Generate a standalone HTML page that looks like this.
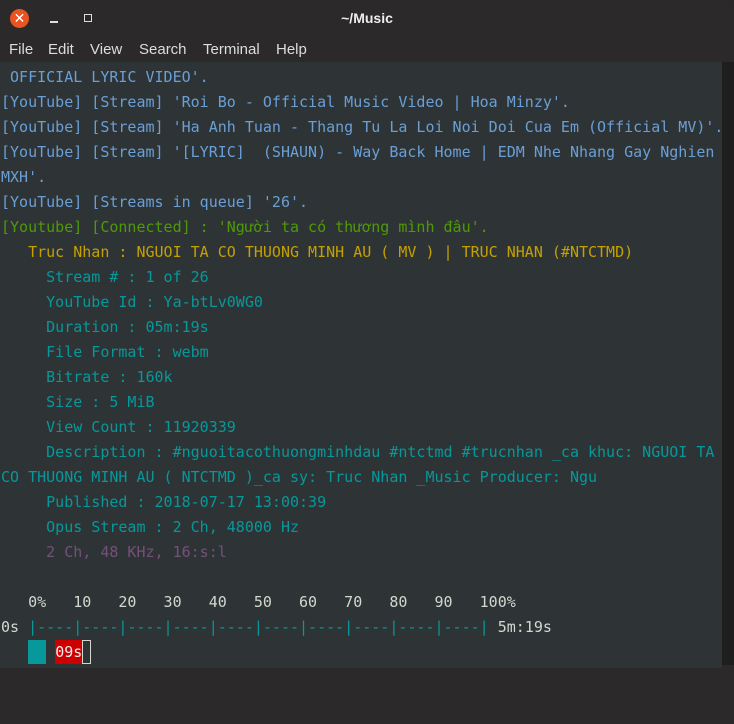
<!DOCTYPE html><html><head><meta charset="utf-8"><style>
body{margin:0;width:734px;height:665px;overflow:hidden;background:#2b2929;font-family:"Liberation Sans",sans-serif}
.hdr{position:absolute;left:0;top:0;width:734px;height:62px;background:#2b2929;border-radius:6px 6px 0 0}
.close{position:absolute;left:10px;top:9px;width:19px;height:19px;border-radius:50%;background:#e95420;color:#fff;font-size:14px;line-height:19px;text-align:center}
.min{position:absolute;left:50px;top:21px;width:8px;height:1.5px;background:#ddd}
.max{position:absolute;left:84px;top:14px;width:6px;height:6px;border:1.5px solid #ddd}
.title{position:absolute;left:0;width:734px;top:10px;text-align:center;color:#eee;font-weight:bold;font-size:14px}
.menu span{position:absolute;top:41px;color:#ddd;font-size:15px}
.term{position:absolute;left:0;top:62px;width:722px;height:603px;background:#2e3436;font-family:"DejaVu Sans Mono","Liberation Mono",monospace;font-size:15px;line-height:25px;white-space:pre;color:#d3d7cf;padding-top:3px}
.t{padding-left:1px}
.sb{position:absolute;left:722px;top:62px;width:12px;height:603px;background:#1e1e1e}
.th{position:absolute;left:725px;top:473px;width:6px;height:189px;background:#7a7a7a;border-radius:3px}
.b{color:#6a9fd6}.g{color:#4e9a06}.y{color:#c4a000}.c{color:#06989a}.p{color:#75507b}
.blk{display:inline-block;background:#06989a;height:24px;vertical-align:top}.red{display:inline-block;height:24px;vertical-align:top;background:#cc0000;color:#eee}
.cur{display:inline-block;height:24px;vertical-align:top;box-shadow:inset 0 0 0 1px #d3d7cf}
</style></head><body>
<div class="hdr"><div class="close">✕</div><div class="min"></div><div class="max"></div><div class="title">~/Music</div>
<div class="menu"><span style="left:9px">File</span><span style="left:48px">Edit</span><span style="left:90px">View</span><span style="left:139px">Search</span><span style="left:203px">Terminal</span><span style="left:276px">Help</span></div></div>
<div class="term"><div class="t"><span class="b"> OFFICIAL LYRIC VIDEO'.
[YouTube] [Stream] 'Roi Bo - Official Music Video | Hoa Minzy'.
[YouTube] [Stream] 'Ha Anh Tuan - Thang Tu La Loi Noi Doi Cua Em (Official MV)'.
[YouTube] [Stream] '[LYRIC]  (SHAUN) - Way Back Home | EDM Nhe Nhang Gay Nghien
MXH'.
[YouTube] [Streams in queue] '26'.</span>
<span class="g">[Youtube] [Connected] : 'Người ta có thương mình đâu'.</span>
<span class="y">   Truc Nhan : NGUOI TA CO THUONG MINH AU ( MV ) | TRUC NHAN (#NTCTMD)</span>
<span class="c">     Stream # : 1 of 26
     YouTube Id : Ya-btLv0WG0
     Duration : 05m:19s
     File Format : webm
     Bitrate : 160k
     Size : 5 MiB
     View Count : 11920339
     Description : #nguoitacothuongminhdau #ntctmd #trucnhan _ca khuc: NGUOI TA
CO THUONG MINH AU ( NTCTMD )_ca sy: Truc Nhan _Music Producer: Ngu
     Published : 2018-07-17 13:00:39
     Opus Stream : 2 Ch, 48000 Hz</span>
<span class="p">     2 Ch, 48 KHz, 16:s:l</span>

   0%   10   20   30   40   50   60   70   80   90   100%
0s <span class="c">|----|----|----|----|----|----|----|----|----|----|</span> 5m:19s
   <span class="blk">  </span> <span class="red">09s</span><span class="cur"> </span></div></div>
<div class="sb"><div class="th"></div></div>
</body></html>
